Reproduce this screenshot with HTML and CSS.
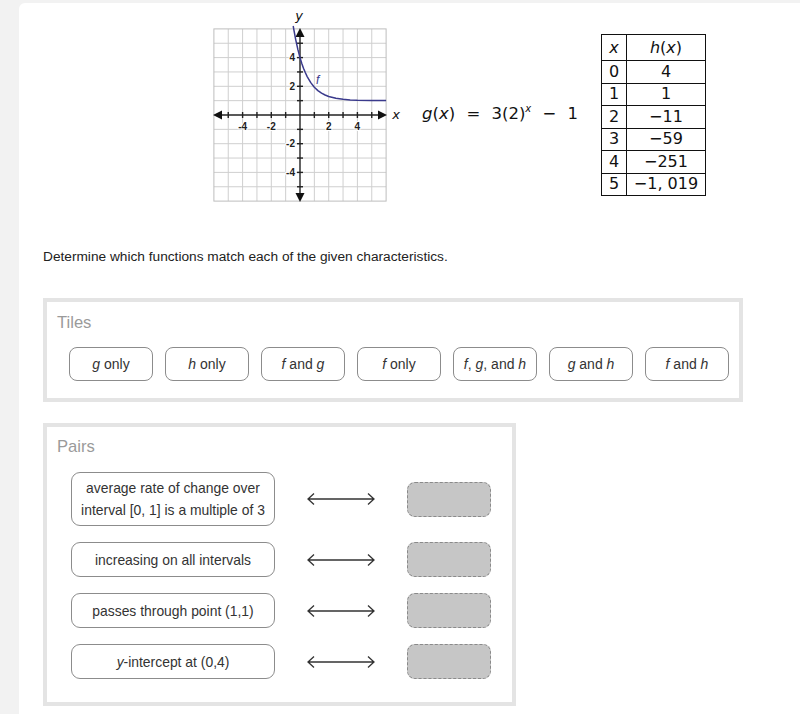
FILE: index.html
```html
<!DOCTYPE html>
<html>
<head>
<meta charset="utf-8">
<link rel="stylesheet" href="styles.css">
</head>
<body>
<div class="panel">
  <div class="figure">
    <svg class="graph" width="200" height="205" viewBox="205 3 200 205" xmlns="http://www.w3.org/2000/svg">
      <g stroke="#cfcfcf" stroke-width="1">
        <line x1="228.25" y1="28.9" x2="228.25" y2="201.1"/>
        <line x1="242.6" y1="28.9" x2="242.6" y2="201.1"/>
        <line x1="256.95" y1="28.9" x2="256.95" y2="201.1"/>
        <line x1="271.3" y1="28.9" x2="271.3" y2="201.1"/>
        <line x1="285.65" y1="28.9" x2="285.65" y2="201.1"/>
        <line x1="314.35" y1="28.9" x2="314.35" y2="201.1"/>
        <line x1="328.7" y1="28.9" x2="328.7" y2="201.1"/>
        <line x1="343.05" y1="28.9" x2="343.05" y2="201.1"/>
        <line x1="357.4" y1="28.9" x2="357.4" y2="201.1"/>
        <line x1="371.75" y1="28.9" x2="371.75" y2="201.1"/>
        <line x1="213.9" y1="43.25" x2="386.1" y2="43.25"/>
        <line x1="213.9" y1="57.6" x2="386.1" y2="57.6"/>
        <line x1="213.9" y1="71.95" x2="386.1" y2="71.95"/>
        <line x1="213.9" y1="86.3" x2="386.1" y2="86.3"/>
        <line x1="213.9" y1="100.65" x2="386.1" y2="100.65"/>
        <line x1="213.9" y1="129.35" x2="386.1" y2="129.35"/>
        <line x1="213.9" y1="143.7" x2="386.1" y2="143.7"/>
        <line x1="213.9" y1="158.05" x2="386.1" y2="158.05"/>
        <line x1="213.9" y1="172.4" x2="386.1" y2="172.4"/>
        <line x1="213.9" y1="186.75" x2="386.1" y2="186.75"/>
      </g>
      <rect x="213.9" y="28.9" width="172.2" height="172.2" fill="none" stroke="#bdbdbd" stroke-width="1"/>
      <g stroke="#222" stroke-width="1.4">
        <line x1="218" y1="115" x2="382" y2="115"/>
        <line x1="300" y1="33" x2="300" y2="197"/>
        <line x1="228.25" y1="112" x2="228.25" y2="118"/>
        <line x1="242.6" y1="112" x2="242.6" y2="118"/>
        <line x1="256.95" y1="112" x2="256.95" y2="118"/>
        <line x1="271.3" y1="112" x2="271.3" y2="118"/>
        <line x1="285.65" y1="112" x2="285.65" y2="118"/>
        <line x1="314.35" y1="112" x2="314.35" y2="118"/>
        <line x1="328.7" y1="112" x2="328.7" y2="118"/>
        <line x1="343.05" y1="112" x2="343.05" y2="118"/>
        <line x1="357.4" y1="112" x2="357.4" y2="118"/>
        <line x1="371.75" y1="112" x2="371.75" y2="118"/>
        <line x1="297" y1="43.25" x2="303" y2="43.25"/>
        <line x1="297" y1="57.6" x2="303" y2="57.6"/>
        <line x1="297" y1="71.95" x2="303" y2="71.95"/>
        <line x1="297" y1="86.3" x2="303" y2="86.3"/>
        <line x1="297" y1="100.65" x2="303" y2="100.65"/>
        <line x1="297" y1="129.35" x2="303" y2="129.35"/>
        <line x1="297" y1="143.7" x2="303" y2="143.7"/>
        <line x1="297" y1="158.05" x2="303" y2="158.05"/>
        <line x1="297" y1="172.4" x2="303" y2="172.4"/>
        <line x1="297" y1="186.75" x2="303" y2="186.75"/>
      </g>
      <g fill="#111">
        <polygon points="213,115 222,110.5 222,119.5"/>
        <polygon points="387,115 378,110.5 378,119.5"/>
        <polygon points="300,28 295.5,37 304.5,37"/>
        <polygon points="300,202 295.5,193 304.5,193"/>
      </g>
      <g font-family="Liberation Sans, Arial, sans-serif" font-size="10" font-weight="bold" fill="#222" stroke="#fff" stroke-width="2" paint-order="stroke">
        <text x="242.6" y="130" text-anchor="middle">-4</text>
        <text x="271.3" y="130" text-anchor="middle">-2</text>
        <text x="328.7" y="130" text-anchor="middle">2</text>
        <text x="357.4" y="130" text-anchor="middle">4</text>
        <text x="295" y="61.3" text-anchor="end">4</text>
        <text x="295" y="90" text-anchor="end">2</text>
        <text x="295" y="147.4" text-anchor="end">-2</text>
        <text x="295" y="176" text-anchor="end">-4</text>
      </g>
      <polyline fill="none" stroke="#3a3a8c" stroke-width="1.5" stroke-linejoin="round" points="293.2,26 293.7,28.9 295.7,39.62 297.85,49.39 300,57.6 301.8,63.4 303.59,68.46 305.4,72.8 307.18,76.59 310.76,82.65 314.35,87.2 317.9,90.6 321.53,93.13 325.1,95.0 328.7,96.45 335.88,98.3 343.05,99.34 350.2,99.9 357.4,100.24 371.75,100.52 386.1,100.61"/>
      <text x="316" y="84" font-family="Liberation Sans, Arial, sans-serif" font-size="12" font-style="italic" fill="#3a3a8c">f</text>
      <text x="299" y="20" text-anchor="middle" font-family="DejaVu Sans, sans-serif" font-size="13" font-style="italic" fill="#111">y</text>
      <text x="396" y="119" text-anchor="middle" font-family="DejaVu Sans, sans-serif" font-size="13" font-style="italic" fill="#111">x</text>
    </svg>
    <div class="eq"><i>g</i>(<i>x</i>) <span class="op">=</span> 3(2)<sup><i>x</i></sup> <span class="op">−</span> 1</div>
    <table class="htable">
      <tr><th><i>x</i></th><th><i>h</i>(<i>x</i>)</th></tr>
      <tr><td>0</td><td>4</td></tr>
      <tr><td>1</td><td>1</td></tr>
      <tr><td>2</td><td>−11</td></tr>
      <tr><td>3</td><td>−59</td></tr>
      <tr><td>4</td><td>−251</td></tr>
      <tr><td>5</td><td>−1, 019</td></tr>
    </table>
  </div>

  <p class="prompt">Determine which functions match each of the given characteristics.</p>

  <div class="box tiles-box">
    <div class="box-title">Tiles</div>
    <div class="tiles">
      <div class="tile"><span><i>g</i> only</span></div>
      <div class="tile"><span><i>h</i> only</span></div>
      <div class="tile"><span><i>f</i> and <i>g</i></span></div>
      <div class="tile"><span><i>f</i> only</span></div>
      <div class="tile"><span><i>f</i>, <i>g</i>, and <i>h</i></span></div>
      <div class="tile"><span><i>g</i> and <i>h</i></span></div>
      <div class="tile"><span><i>f</i> and <i>h</i></span></div>
    </div>
  </div>

  <div class="box pairs-box">
    <div class="box-title">Pairs</div>
    <div class="pairs">
      <div class="pair">
        <div class="item"><span>average rate of change over<br>interval [0, 1] is a multiple of 3</span></div>
        <svg class="arrow" width="70" height="14" viewBox="0 0 70 14"><path d="M2 7H68M8 1.5L2 7L8 12.5M62 1.5L68 7L62 12.5" fill="none" stroke="#333" stroke-width="1.3"/></svg>
        <div class="drop"></div>
      </div>
      <div class="pair">
        <div class="item"><span>increasing on all intervals</span></div>
        <svg class="arrow" width="70" height="14" viewBox="0 0 70 14"><path d="M2 7H68M8 1.5L2 7L8 12.5M62 1.5L68 7L62 12.5" fill="none" stroke="#333" stroke-width="1.3"/></svg>
        <div class="drop"></div>
      </div>
      <div class="pair">
        <div class="item"><span>passes through point (1,1)</span></div>
        <svg class="arrow" width="70" height="14" viewBox="0 0 70 14"><path d="M2 7H68M8 1.5L2 7L8 12.5M62 1.5L68 7L62 12.5" fill="none" stroke="#333" stroke-width="1.3"/></svg>
        <div class="drop"></div>
      </div>
      <div class="pair">
        <div class="item"><span><i>y</i>-intercept at (0,4)</span></div>
        <svg class="arrow" width="70" height="14" viewBox="0 0 70 14"><path d="M2 7H68M8 1.5L2 7L8 12.5M62 1.5L68 7L62 12.5" fill="none" stroke="#333" stroke-width="1.3"/></svg>
        <div class="drop"></div>
      </div>
    </div>
  </div>
</div>
</body>
</html>
```

FILE: styles.css
```css
* { box-sizing: border-box; }
html, body { margin: 0; padding: 0; }
body {
  background: #f2f2f2;
  font-family: "Liberation Sans", Arial, sans-serif;
  color: #222;
  overflow: hidden;
}
.panel {
  margin: 3px 0 0 19px;
  min-height: 711px;
  background: #fff;
  border-top-left-radius: 6px;
  padding-left: 24px;
}
.figure {
  display: flex;
  align-items: flex-start;
  height: 205px;
  padding-left: 162px;
}
.graph { display: block; flex: none; }
.eq {
  flex: none;
  width: 179px;
  margin-left: 17px;
  margin-top: 101px;
  font-family: "DejaVu Sans", sans-serif;
  font-size: 16.5px;
  line-height: 20px;
  color: #111;
  white-space: pre;
}
.eq .op { padding: 0 6px; }
.eq sup { font-size: 10px; vertical-align: 7px; line-height: 0; }
.htable {
  flex: none;
  margin-top: 31px;
  border-collapse: collapse;
  border: 1.5px solid #111;
  font-family: "DejaVu Sans", sans-serif;
  font-size: 16px;
  color: #111;
}
.htable th, .htable td {
  border: 1px solid #111;
  padding: 0;
  text-align: center;
  font-weight: normal;
}
.htable th { height: 26px; }
.htable td { height: 22.5px; line-height: 20px; }
.htable th:first-child, .htable td:first-child { width: 25px; }
.htable th:last-child, .htable td:last-child { width: 79px; }
.prompt {
  margin: 41px 0 0 0;
  font-size: 13.7px;
  line-height: 16px;
  color: #222;
}
.box {
  border: 4px solid #e4e4e4;
  background: #fff;
}
.tiles-box {
  width: 700px;
  margin-top: 33px;
  padding: 11px 10px 17px 10px;
}
.box-title {
  font-size: 16.6px;
  line-height: 20px;
  color: #9a9a9a;
}
.tiles {
  display: flex;
  gap: 12px;
  margin-top: 14px;
  padding-left: 12px;
}
.tile {
  width: 84px;
  height: 34px;
  border: 1px solid #8c8c8c;
  border-radius: 8px;
  display: flex;
  align-items: center;
  justify-content: center;
  font-size: 14px;
  color: #333;
  white-space: nowrap;
}
.pairs-box {
  width: 473px;
  margin-top: 21px;
  padding: 10px 10px 23px 10px;
}
.pairs {
  display: flex;
  flex-direction: column;
  gap: 16px;
  margin-top: 15px;
  padding-left: 14px;
}
.pair {
  display: flex;
  align-items: center;
}
.item {
  width: 204px;
  min-height: 35px;
  border: 1px solid #8c8c8c;
  border-radius: 9px;
  padding: 4px 4px;
  display: flex;
  align-items: center;
  justify-content: center;
  text-align: center;
  font-size: 13.9px;
  line-height: 22px;
  color: #333;
  white-space: nowrap;
}
.arrow { display: block; margin-left: 31px; flex: none; }
.drop {
  margin-left: 31px;
  width: 84px;
  height: 35px;
  background: #c6c6c6;
  border: 1px dashed #8a8a8a;
  border-radius: 8px;
}
```
